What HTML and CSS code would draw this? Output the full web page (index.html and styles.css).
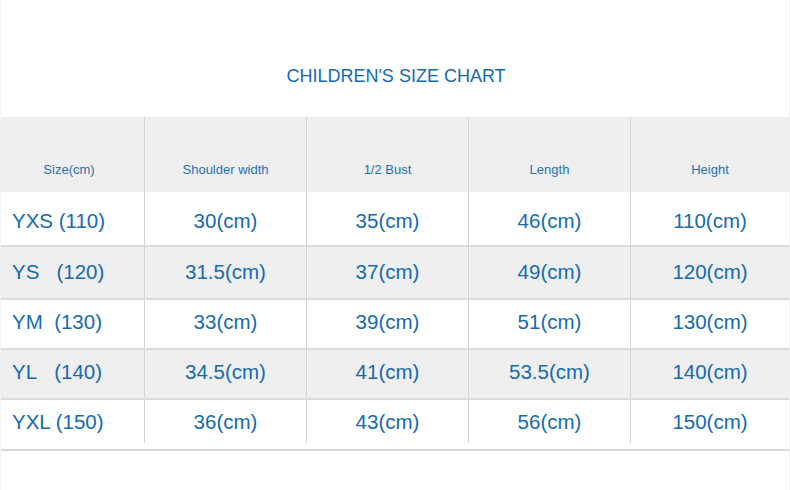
FILE: index.html
```html
<!DOCTYPE html>
<html>
<head>
<meta charset="utf-8">
<link rel="stylesheet" href="styles.css">
</head>
<body>
<div class="page">
  <h1 class="title">CHILDREN'S SIZE CHART</h1>
  <div class="chart">
    <div class="row head">
      <div class="cell first">Size(cm)</div>
      <div class="cell">Shoulder width</div>
      <div class="cell">1/2 Bust</div>
      <div class="cell">Length</div>
      <div class="cell">Height</div>
    </div>
    <div class="row r1">
      <div class="cell size">YXS (110)</div>
      <div class="cell">30(cm)</div>
      <div class="cell">35(cm)</div>
      <div class="cell">46(cm)</div>
      <div class="cell">110(cm)</div>
    </div>
    <div class="row r2 alt">
      <div class="cell size">YS&nbsp;&nbsp;&nbsp;(120)</div>
      <div class="cell">31.5(cm)</div>
      <div class="cell">37(cm)</div>
      <div class="cell">49(cm)</div>
      <div class="cell">120(cm)</div>
    </div>
    <div class="row r3">
      <div class="cell size">YM&nbsp;&nbsp;(130)</div>
      <div class="cell">33(cm)</div>
      <div class="cell">39(cm)</div>
      <div class="cell">51(cm)</div>
      <div class="cell">130(cm)</div>
    </div>
    <div class="row r4 alt">
      <div class="cell size">YL&nbsp;&nbsp;&nbsp;(140)</div>
      <div class="cell">34.5(cm)</div>
      <div class="cell">41(cm)</div>
      <div class="cell">53.5(cm)</div>
      <div class="cell">140(cm)</div>
    </div>
    <div class="row r5">
      <div class="cell size">YXL (150)</div>
      <div class="cell">36(cm)</div>
      <div class="cell">43(cm)</div>
      <div class="cell">56(cm)</div>
      <div class="cell">150(cm)</div>
    </div>
  </div>
</div>
</body>
</html>
```

FILE: styles.css
```css
html, body {
  margin: 0;
  padding: 0;
  background: #ffffff;
}

.page {
  width: 790px;
  height: 490px;
  box-sizing: border-box;
  border-left: 1px solid #f3f3f3;
  border-right: 1px solid #f0f0f0;
  font-family: "Liberation Sans", Arial, sans-serif;
  color: #166ab2;
}

.title {
  margin: 0;
  height: 117px;
  box-sizing: border-box;
  padding-top: 66px;
  padding-left: 2px;
  font-size: 18px;
  line-height: 20px;
  font-weight: normal;
  text-align: center;
  color: #166ab2;
}

.chart {
  display: flex;
  flex-direction: column;
}

.row {
  display: grid;
  grid-template-columns: 143px 162px 162px 162px 159px;
  border-bottom: 2px solid #dadada;
}

.row.alt {
  background: #efefef;
}

.cell {
  display: flex;
  align-items: center;
  justify-content: center;
  font-size: 20.5px;
  line-height: 23px;
  white-space: nowrap;
}

.cell + .cell {
  border-left: 1px solid #d3d3d3;
}

.cell.size {
  justify-content: flex-start;
  padding-left: 11px;
}

.row.head {
  background: #efefef;
  border-bottom: none;
}

.row.head .cell {
  height: 75px;
  box-sizing: border-box;
  align-items: flex-start;
  padding-top: 45px;
  font-size: 13px;
  line-height: 16px;
  color: #2470b5;
}

.row.head .cell.first {
  padding-right: 7px;
}

.r1 .cell {
  height: 53px;
  box-sizing: border-box;
  padding-top: 4px;
}

.r2 .cell {
  height: 51px;
  box-sizing: border-box;
  padding-bottom: 3px;
}

.r3 .cell,
.r4 .cell {
  height: 48px;
  box-sizing: border-box;
  padding-bottom: 5px;
}

.r5 {
  padding-bottom: 6px;
}

.r5 .cell {
  height: 43px;
}
```
